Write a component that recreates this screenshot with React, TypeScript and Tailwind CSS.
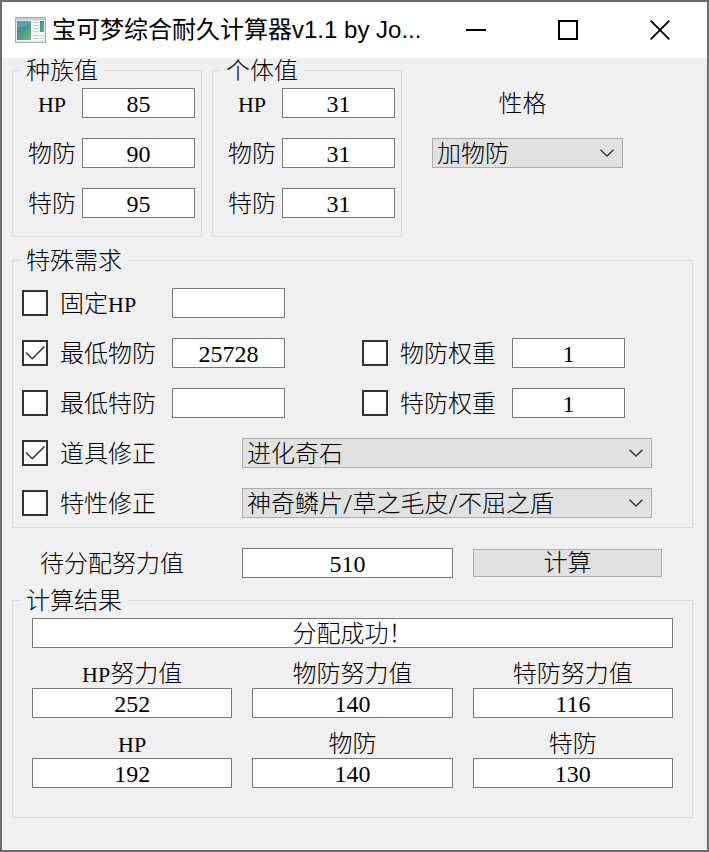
import React, { useId } from 'react';

const boxClass =
  'block h-[30px] min-w-0 border border-[#7a7a7a] bg-white px-0 pt-[2px] pb-0 text-center outline-none focus:border-[#0078d7]';

// Narrow latin run, two letters take about the width of one CJK character
const Hp: React.FC = () => <span className="text-[22px]">HP</span>;

interface GroupProps {
  title: string;
  className?: string;
  children: React.ReactNode;
}

const Group: React.FC<GroupProps> = ({ title, className = '', children }) => (
  <fieldset className={`min-w-0 border border-[#dcdcdc] pr-[6px] pl-[7px] ${className}`}>
    <legend className="h-6 px-[6px] leading-[26px]">{title}</legend>
    {children}
  </fieldset>
);

interface StatFieldProps {
  label: React.ReactNode;
  value: string;
}

const StatField: React.FC<StatFieldProps> = ({ label, value }) => {
  const id = useId();
  return (
    <div className="flex h-[30px] gap-[6px]">
      <label htmlFor={id} className="w-12 text-center leading-8">{label}</label>
      <input id={id} type="text" defaultValue={value} className={`${boxClass} flex-1`} />
    </div>
  );
};

const StatGroup: React.FC<{ title: string; values: string[] }> = ({ title, values }) => (
  <Group title={title} className="w-[190px] pb-[18px]">
    <div className="flex flex-col gap-5 pt-[6px] pl-2">
      <StatField label={<Hp />} value={values[0]} />
      <StatField label="物防" value={values[1]} />
      <StatField label="特防" value={values[2]} />
    </div>
  </Group>
);

interface CheckProps {
  children: React.ReactNode;
  checked?: boolean;
  className?: string;
}

const Check: React.FC<CheckProps> = ({ children, checked = false, className = 'w-[150px]' }) => (
  <label className={`flex h-[30px] shrink-0 items-center gap-3 ${className}`}>
    <span className="grid">
      <input
        type="checkbox"
        defaultChecked={checked}
        className="peer col-start-1 row-start-1 size-[26px] appearance-none border-2 border-[#333] bg-white"
      />
      <svg
        viewBox="0 0 26 26"
        className="pointer-events-none invisible col-start-1 row-start-1 size-[26px] peer-checked:visible"
        fill="none"
        stroke="#333"
        strokeWidth="1.6"
      >
        <path d="M4 12.5 L10.2 18.7 L22.5 6.5" />
      </svg>
    </span>
    <span className="h-[30px] leading-8">{children}</span>
  </label>
);

interface DropdownProps {
  options: string[];
  label?: string;
  id?: string;
  className?: string;
}

const Dropdown: React.FC<DropdownProps> = ({ options, label, id, className = '' }) => (
  <div className={`relative min-w-0 ${className}`}>
    <select
      id={id}
      aria-label={label}
      className="block h-[30px] w-full appearance-none border border-[#adadad] bg-[#e1e1e1] py-0 pr-8 pl-1 font-['Roboto','Noto_Sans_CJK_SC',sans-serif] font-light outline-none"
    >
      {options.map((option) => (
        <option key={option}>{option}</option>
      ))}
    </select>
    <svg
      viewBox="0 0 14 8"
      className="pointer-events-none absolute top-[11px] right-[9px] h-2 w-[14px]"
      fill="none"
      stroke="#333"
      strokeWidth="1.4"
    >
      <path d="M0.5 0.7 L7 7 L13.5 0.7" />
    </svg>
  </div>
);

const Result: React.FC<StatFieldProps> = ({ label, value }) => {
  const id = useId();
  return (
    <div className="flex min-w-0 flex-col">
      <label htmlFor={id} className="h-[30px] text-center leading-8">{label}</label>
      <input id={id} type="text" readOnly value={value} className={boxClass} />
    </div>
  );
};

const AppIcon: React.FC = () => (
  <svg viewBox="0 0 31 26" className="h-[26px] w-[31px] shrink-0">
    <defs>
      <linearGradient id="pane" x1="0" y1="0" x2="1" y2="1">
        <stop offset="0" stopColor="#4682b0" />
        <stop offset="0.5" stopColor="#4a9690" />
        <stop offset="1" stopColor="#70bb74" />
      </linearGradient>
      <linearGradient id="frame" x1="0" y1="0" x2="0" y2="1">
        <stop offset="0" stopColor="#c3cbd2" />
        <stop offset="1" stopColor="#e3e6e9" />
      </linearGradient>
    </defs>
    <rect x="0.5" y="0.5" width="30" height="25" fill="url(#frame)" stroke="#a5adb4" />
    <rect x="1.5" y="3.5" width="28" height="20.5" fill="#f3f5f6" />
    <rect x="2" y="4" width="14" height="19" fill="url(#pane)" />
    <path d="M2 10 Q9 10 16 6 V4 H2Z" fill="#77a9cb" opacity="0.5" />
    <path d="M18 5.5h6M18 8.5h6M18 11.5h6M18 14.5h6M18 18.5h6M18 21.5h6" stroke="#c9ced2" />
    <rect x="25" y="4" width="4" height="11" fill="url(#pane)" />
    <path d="M25 18.5h4M25 21.5h4" stroke="#d5d9dc" />
  </svg>
);

const TitleBar: React.FC = () => (
  <header className="flex h-14 items-center bg-white pr-px pl-[13px] font-['Liberation_Sans','Noto_Sans_CJK_SC',sans-serif]">
    <AppIcon />
    <h1 className="ml-[6px] min-w-0 flex-1 leading-9 font-normal whitespace-nowrap">
      宝可梦综合耐久计算器v1.1 by Jo...
    </h1>
    <div className="flex self-stretch">
      <button type="button" aria-label="最小化" className="grid w-[92px] place-items-center">
        <svg viewBox="0 0 20 20" className="size-5" stroke="#000" strokeWidth="2">
          <path d="M0 10H20" />
        </svg>
      </button>
      <button type="button" aria-label="最大化" className="grid w-[92px] place-items-center">
        <svg viewBox="0 0 20 20" className="size-5" fill="none" stroke="#000" strokeWidth="2">
          <path d="M1 1H19V19H1Z" />
        </svg>
      </button>
      <button type="button" aria-label="关闭" className="grid w-[92px] place-items-center">
        <svg viewBox="0 0 20 20" className="size-5" stroke="#000" strokeWidth="1.8">
          <path d="M0.7 0.7L19.3 19.3M19.3 0.7L0.7 19.3" />
        </svg>
      </button>
    </div>
  </header>
);

export default function App() {
  return (
    <div className="min-h-screen border-2 border-[#6e6e6e] bg-[#f0f0f0] text-2xl leading-[30px] text-black">
      <TitleBar />
      <main className="pr-[14px] pb-8 pl-[10px] font-['Liberation_Serif','Noto_Sans_CJK_SC',serif] font-light">
        <div className="flex items-start gap-[10px]">
          <StatGroup title="种族值" values={['85', '90', '95']} />
          <StatGroup title="个体值" values={['31', '31', '31']} />
          <div className="ml-5 flex w-[191px] flex-col gap-5 pt-[30px]">
            <label htmlFor="nature" className="h-[30px] pr-[10px] text-center leading-8">性格</label>
            <Dropdown id="nature" options={['加物防', '加特防', '其他']} />
          </div>
        </div>

        <Group title="特殊需求" className="mt-[11px] pb-[9px]">
          <div className="flex flex-col gap-5 pt-4 pr-[34px] pl-[2px]">
            <div className="flex">
              <Check>固定<Hp /></Check>
              <input type="text" aria-label="固定HP" className={`${boxClass} w-[113px]`} />
            </div>
            <div className="flex">
              <Check checked>最低物防</Check>
              <input type="text" aria-label="最低物防" defaultValue="25728" className={`${boxClass} w-[113px]`} />
              <Check className="ml-[77px] w-[150px]">物防权重</Check>
              <input type="text" aria-label="物防权重" defaultValue="1" className={`${boxClass} w-[113px]`} />
            </div>
            <div className="flex">
              <Check>最低特防</Check>
              <input type="text" aria-label="最低特防" className={`${boxClass} w-[113px]`} />
              <Check className="ml-[77px] w-[150px]">特防权重</Check>
              <input type="text" aria-label="特防权重" defaultValue="1" className={`${boxClass} w-[113px]`} />
            </div>
            <div className="flex">
              <Check checked className="w-[220px]">道具修正</Check>
              <Dropdown label="道具修正" options={['进化奇石', '突击背心']} className="flex-1" />
            </div>
            <div className="flex">
              <Check className="w-[220px]">特性修正</Check>
              <Dropdown label="特性修正" options={['神奇鳞片/草之毛皮/不屈之盾', '毛皮大衣']} className="flex-1" />
            </div>
          </div>
        </Group>

        <div className="mt-5 mb-[10px] flex h-[30px] items-center pr-[31px]">
          <label htmlFor="effort" className="h-[30px] w-[230px] shrink-0 pl-7 leading-8">待分配努力值</label>
          <input id="effort" type="text" defaultValue="510" className={`${boxClass} flex-1`} />
          <button
            type="button"
            className="ml-5 h-7 w-[189px] border border-[#adadad] bg-[#e1e1e1] leading-[26px] hover:border-[#0078d7] hover:bg-[#e5f1fb]"
          >
            计算
          </button>
        </div>

        <Group title="计算结果" className="pb-[29px]">
          <div className="pt-[6px] pr-[13px] pl-3">
            <input type="text" readOnly aria-label="计算结果" value="分配成功！" className={`${boxClass} w-full`} />
            <div className="mt-[10px] grid grid-cols-3 gap-x-5 gap-y-[10px]">
              <Result label={<><Hp />努力值</>} value="252" />
              <Result label="物防努力值" value="140" />
              <Result label="特防努力值" value="116" />
              <Result label={<Hp />} value="192" />
              <Result label="物防" value="140" />
              <Result label="特防" value="130" />
            </div>
          </div>
        </Group>
      </main>
    </div>
  );
}
